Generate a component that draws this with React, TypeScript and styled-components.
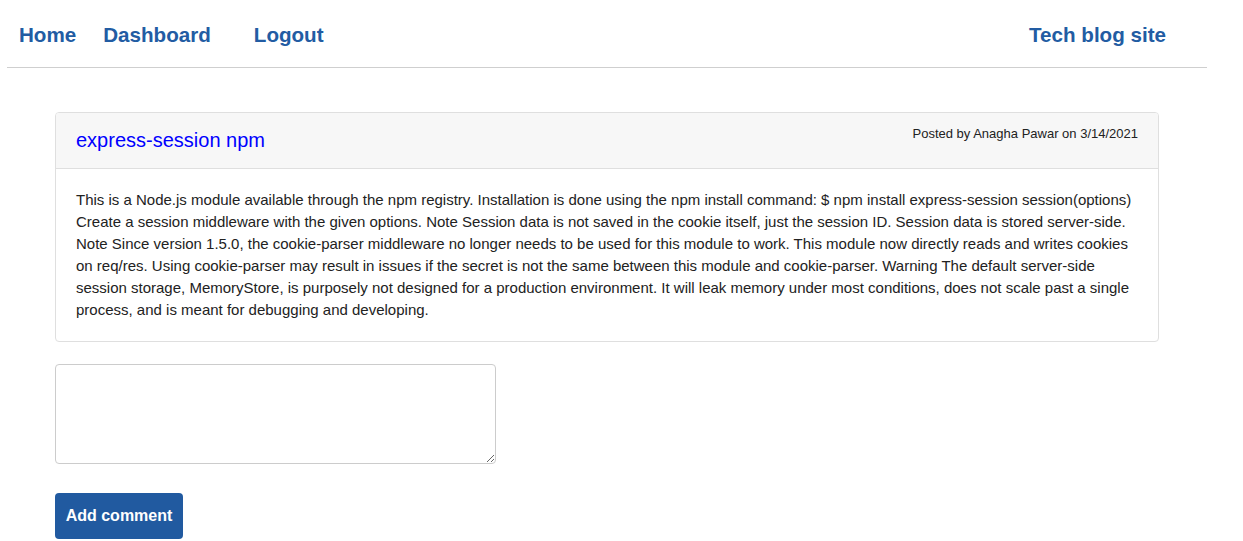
import styled, { createGlobalStyle } from 'styled-components';

const GlobalStyle = createGlobalStyle`
  body {
    margin: 0;
    background: #fff;
    font-family: 'Liberation Sans', Arial, sans-serif;
  }
`;

const Header = styled.header`
  display: flex;
  align-items: center;
  justify-content: space-between;
  width: 1200px;
  height: 68px;
  margin-left: 7px;
  border-bottom: 1px solid #cfcfcf;
  box-sizing: border-box;
`;

const Nav = styled.nav`
  display: flex;
  align-items: center;
  padding-left: 12px;
`;

const NavLink = styled.a<{ $gap?: number }>`
  font-size: 20.6px;
  font-weight: 700;
  color: #225ca3;
  text-decoration: none;
  margin-right: ${(p) => p.$gap ?? 0}px;
  line-height: 24px;
  padding-top: 2px;
`;

const Brand = styled.a`
  font-size: 20.6px;
  font-weight: 700;
  color: #225ca3;
  text-decoration: none;
  margin-right: 41px;
  line-height: 24px;
  padding-top: 2px;
`;

const Main = styled.main`
  padding: 44px 0 0 55px;
`;

const Card = styled.article`
  width: 1104px;
  border: 1px solid #dfdfdf;
  border-radius: 4px;
  box-sizing: border-box;
  overflow: hidden;
`;

const CardHeader = styled.div`
  display: flex;
  justify-content: space-between;
  align-items: flex-start;
  height: 56px;
  padding: 0 20px;
  background: #f7f7f7;
  border-bottom: 1px solid #dfdfdf;
  box-sizing: border-box;
`;

const Title = styled.h2`
  margin: 15px 0 0;
  font-size: 20px;
  font-weight: 400;
  line-height: 24px;
  color: #0000ff;
`;

const Meta = styled.span`
  margin-top: 13px;
  font-size: 13px;
  line-height: 16px;
  color: #222;
`;

const CardBody = styled.p`
  margin: 0;
  padding: 20px;
  font-size: 15px;
  line-height: 22px;
  color: #222;
`;

const CommentForm = styled.form`
  display: flex;
  flex-direction: column;
  align-items: flex-start;
  margin-top: 22px;
`;

const TextArea = styled.textarea`
  width: 441px;
  height: 100px;
  box-sizing: border-box;
  border: 1px solid #cccccc;
  border-radius: 4px;
  font-family: inherit;
  font-size: 14px;
  padding: 6px;
`;

const Button = styled.button`
  margin-top: 29px;
  width: 128px;
  height: 46px;
  border: none;
  border-radius: 4px;
  background: #215aa0;
  color: #fff;
  font-family: inherit;
  font-size: 16px;
  font-weight: 700;
  cursor: pointer;
`;

export default function App() {
  return (
    <>
      <GlobalStyle />
      <Header>
        <Nav>
          <NavLink href="#" $gap={27}>Home</NavLink>
          <NavLink href="#" $gap={43}>Dashboard</NavLink>
          <NavLink href="#">Logout</NavLink>
        </Nav>
        <Brand href="#">Tech blog site</Brand>
      </Header>
      <Main>
        <Card>
          <CardHeader>
            <Title>express-session npm</Title>
            <Meta>Posted by Anagha Pawar on 3/14/2021</Meta>
          </CardHeader>
          <CardBody>
            This is a Node.js module available through the npm registry. Installation is done using the npm install
            command: $ npm install express-session session(options) Create a session middleware with the given
            options. Note Session data is not saved in the cookie itself, just the session ID. Session data is stored
            server-side. Note Since version 1.5.0, the cookie-parser middleware no longer needs to be used for this
            module to work. This module now directly reads and writes cookies on req/res. Using cookie-parser may
            result in issues if the secret is not the same between this module and cookie-parser. Warning The default
            server-side session storage, MemoryStore, is purposely not designed for a production environment. It will
            leak memory under most conditions, does not scale past a single process, and is meant for debugging and
            developing.
          </CardBody>
        </Card>
        <CommentForm onSubmit={(e) => e.preventDefault()}>
          <TextArea />
          <Button type="submit">Add comment</Button>
        </CommentForm>
      </Main>
    </>
  );
}
